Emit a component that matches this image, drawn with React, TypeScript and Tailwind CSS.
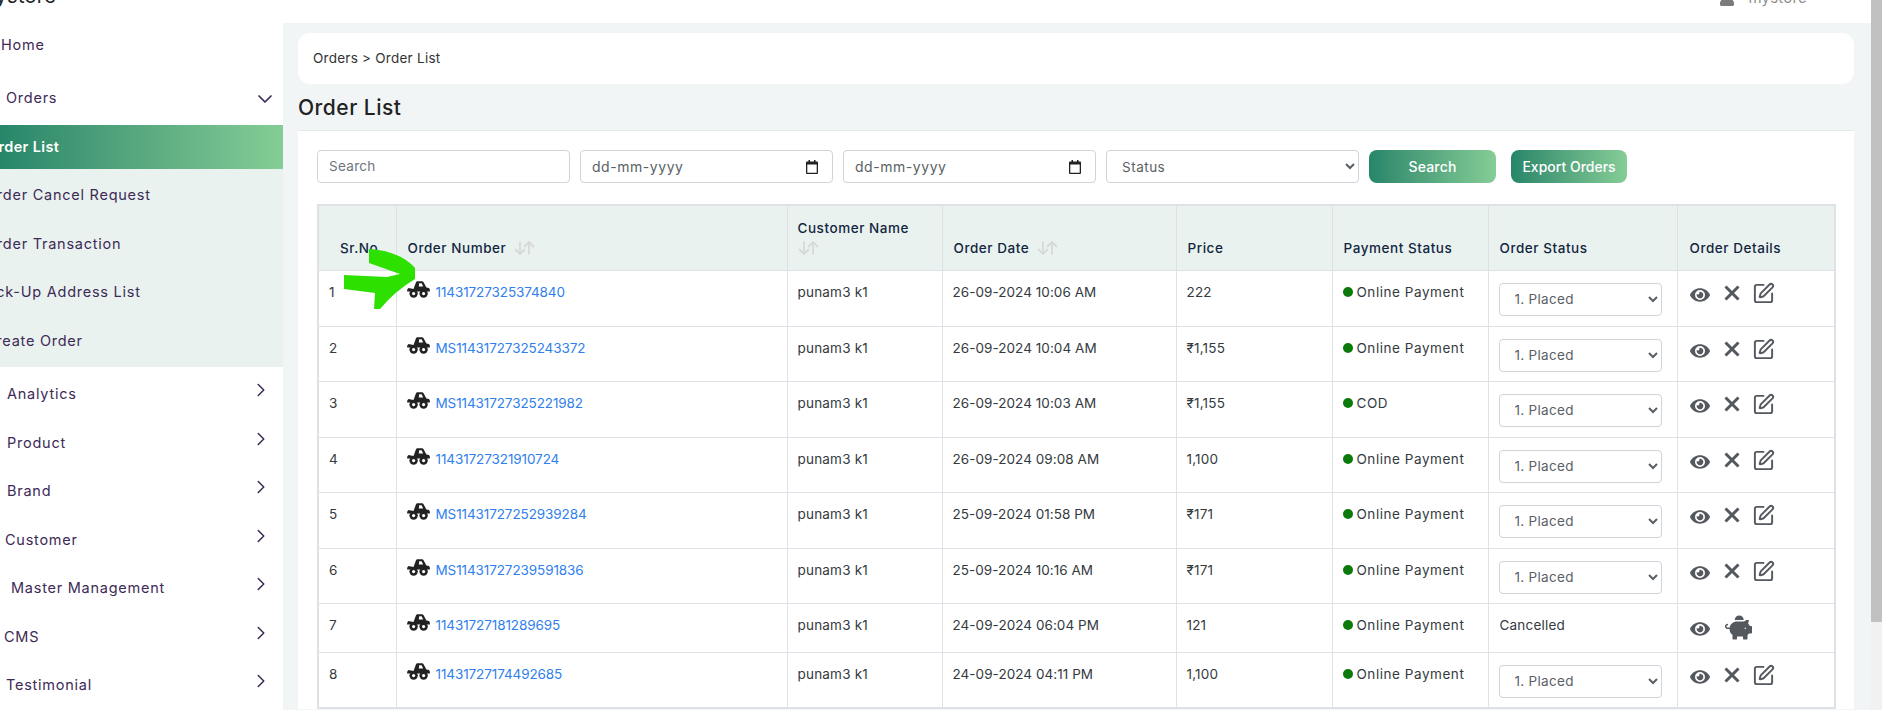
import React from "react";
import { ChevronDown, ChevronRight, SquarePen } from "lucide-react";
import { FaEye, FaPiggyBank, FaUser } from "react-icons/fa";

const font = { fontFamily: '"Inter", "Open Sans", sans-serif' };

const subItems = [
  { label: "Order Cancel Request", cls: "-ml-[15px]" },
  { label: "Order Transaction", cls: "-ml-[15px]" },
  { label: "Pick-Up Address List", cls: "-ml-[18px]" },
  { label: "Create Order", cls: "-ml-[15px]" },
];
const navItems = [
  { label: "Analytics", cls: "ml-[7px]" },
  { label: "Product", cls: "ml-[7px]" },
  { label: "Brand", cls: "ml-[7px]" },
  { label: "Customer", cls: "ml-[5px]" },
  { label: "Master Management", cls: "ml-[11px]" },
  { label: "CMS", cls: "ml-[4px]" },
  { label: "Testimonial", cls: "ml-[6px]" },
];

const rows = [
  ["1", "11431727325374840", "26-09-2024 10:06 AM", "222", "Online Payment", "h-[56px]"],
  ["2", "MS11431727325243372", "26-09-2024 10:04 AM", "₹1,155", "Online Payment", "h-[55px]"],
  ["3", "MS11431727325221982", "26-09-2024 10:03 AM", "₹1,155", "COD", "h-[56px]"],
  ["4", "11431727321910724", "26-09-2024 09:08 AM", "1,100", "Online Payment", "h-[55px]"],
  ["5", "MS11431727252939284", "25-09-2024 01:58 PM", "₹171", "Online Payment", "h-[56px]"],
  ["6", "MS11431727239591836", "25-09-2024 10:16 AM", "₹171", "Online Payment", "h-[55px]"],
  ["7", "11431727181289695", "24-09-2024 06:04 PM", "121", "Online Payment", "h-[49px]"],
  ["8", "11431727174492685", "24-09-2024 04:11 PM", "1,100", "Online Payment", "h-[56px]"],
];

function Sort() {
  return (
    <svg width="21" height="14" viewBox="0 0 21 14" fill="none" stroke="#d7d9d9" strokeWidth="1.8" className="shrink-0">
      <path d="M6 0.5V13 M1 8l5 5 5-5" />
      <path d="M15 13.5V1 M10 6l5-5 5 5" />
    </svg>
  );
}

function Truck() {
  return (
    <svg width="23" height="17" viewBox="0 0 23 17" className="mr-[6px] -mt-[4px] shrink-0">
      <path d="M6.5 8 L9 1.2 Q9.3 0.3 10.5 0.3 H15 Q16 0.3 16.6 1.3 L19.4 6.5 L22 7 Q23 7.5 23 10.5 H0 Q0 7.5 1.5 7 Z M12.2 2.3 L11.8 5.5 H16.2 L14.6 2.3 Z" fill="#222" fillRule="evenodd" />
      <circle cx="6.6" cy="12.6" r="4.2" fill="#222" />
      <circle cx="16.6" cy="12.6" r="4.2" fill="#222" />
      <circle cx="6.6" cy="12.6" r="1.6" fill="#fff" />
      <circle cx="16.6" cy="12.6" r="1.6" fill="#fff" />
    </svg>
  );
}

function CalendarGlyph() {
  return (
    <svg width="12" height="14" viewBox="0 0 12 14" className="shrink-0">
      <path d="M2.5 0h1.5v1.5h4V0h1.5v1.5H11a1 1 0 0 1 1 1V13a1 1 0 0 1-1 1H1a1 1 0 0 1-1-1V2.5a1 1 0 0 1 1-1h1.5z M1.3 4.5v8.2h9.4V4.5z" fill="#222" fillRule="evenodd" />
    </svg>
  );
}

function DateBox() {
  return (
    <div className="flex h-[33px] w-[253px] items-center justify-between rounded-[4px] border border-[#ced4da] bg-white pl-[11px] pr-[14px] text-[14px] tracking-[0.55px] text-[#5a5f65]">
      <span>dd-mm-yyyy</span>
      <CalendarGlyph />
    </div>
  );
}

const thCls = "border border-[#dee2e6] px-[11px] pb-[12px] align-bottom text-left text-[13.5px] font-medium leading-[20px] tracking-[0.55px] text-[#12263f]";
const tdCls = "border border-[#dee2e6] px-[10px] pt-[11px] align-top text-[13.5px] leading-[20px] tracking-[0.2px] text-[#333a40]";

export default function App() {
  return (
    <div className="flex h-[710px] w-[1882px] overflow-hidden bg-white" style={font}>
      <div className="flex min-w-0 flex-1 flex-col">
        <header className="flex h-[23px] shrink-0 items-start justify-between overflow-hidden bg-white">
          <span className="-ml-[22px] -mt-[17px] text-[20px] leading-[26px] tracking-[0.3px] text-[#222]">mystore</span>
          <div className="mr-[64px] -mt-[12px] flex items-start gap-[13px] text-[15px] leading-[20px] text-[#8f8f8f]">
            <FaUser size={16} className="mt-[2px] text-[#7b7b7b]" />
            <span className="tracking-[0.2px]">mystore</span>
          </div>
        </header>
        <div className="flex min-h-0 flex-1">
          <aside className="w-[283px] shrink-0 overflow-hidden bg-white text-[14.5px] tracking-[0.75px] text-[#3d2a56]">
            <div className="flex h-[44px] items-center pl-[1px]">Home</div>
            <div className="flex h-[58px] items-center justify-between pb-[7px] pl-[6px] pr-[6px] pt-[11px]">
              <span>Orders</span>
              <ChevronDown size={24} strokeWidth={1.7} className="mt-[2px]" />
            </div>
            <div className="flex h-[44px] items-center overflow-hidden bg-gradient-to-r from-[#26866a] to-[#85cd96] font-semibold tracking-[0.35px] text-white">
              <span className="-ml-[13px]">Order List</span>
            </div>
            <div className="bg-[#e9f2ef] pt-[2px] pb-[2px]">
              {subItems.map((s) => (
                <div key={s.label} className="flex h-[48.5px] items-center overflow-hidden">
                  <span className={`whitespace-nowrap ${s.cls}`}>{s.label}</span>
                </div>
              ))}
            </div>
            {navItems.map((n) => (
              <div key={n.label} className="flex h-[48.5px] items-center justify-between pr-[11px]">
                <span className={`pt-[6px] ${n.cls}`}>{n.label}</span>
                <ChevronRight size={22} strokeWidth={1.7} className="-mt-[2px]" />
              </div>
            ))}
          </aside>
          <main className="min-w-0 flex-1 bg-[#f1f5f5] pl-[15px] pr-[17px] pt-[10px]">
            <div className="flex h-[51px] items-center rounded-[12px] bg-white pl-[15px] text-[13.5px] tracking-[0.25px] text-[#333]">
              Orders &gt; Order List
            </div>
            <h1 className="mt-[10px] h-[36px] text-[21px] font-medium leading-[28px] tracking-[0.5px] text-[#222]">Order List</h1>
            <section className="border-t border-[#e6e9ea] bg-white pl-[19px] pr-[19px] pt-[19px]">
              <div className="flex items-center">
                <input
                  placeholder="Search"
                  className="-mt-[1px] h-[33px] w-[253px] rounded-[4px] border border-[#ced4da] bg-white pl-[11px] text-[13.5px] tracking-[0.3px] placeholder:text-[#6c757d]"
                />
                <div className="ml-[10px]"><DateBox /></div>
                <div className="ml-[10px]"><DateBox /></div>
                <select className="ml-[10px] h-[33px] w-[253px] rounded-[4px] border border-[#ced4da] bg-white pl-[11px] text-[13.5px] tracking-[0.5px] text-[#5a5f65]">
                  <option>Status</option>
                </select>
                <button className="ml-[10px] h-[33px] w-[127px] rounded-[8px] bg-gradient-to-r from-[#26866a] to-[#85cd96] text-[14px] font-medium tracking-[0.2px] text-white">Search</button>
                <button className="ml-[15px] h-[33px] w-[116px] rounded-[8px] bg-gradient-to-r from-[#26866a] to-[#85cd96] text-[14px] font-medium text-white">Export Orders</button>
              </div>
              <table className="mt-[21px] w-[1517px] table-fixed border-collapse border-2 border-[#dee2e6]">
                <colgroup>
                  <col className="w-[78px]" />
                  <col className="w-[391px]" />
                  <col className="w-[155px]" />
                  <col className="w-[234px]" />
                  <col className="w-[156px]" />
                  <col className="w-[156px]" />
                  <col className="w-[189px]" />
                  <col className="w-[158px]" />
                </colgroup>
                <thead>
                  <tr className="h-[65px] bg-[#e9f2ef]">
                    <th className={`${thCls} !pl-[21px]`}>Sr.No</th>
                    <th className={thCls}><div className="flex items-center gap-[8px]">Order Number <Sort /></div></th>
                    <th className={`${thCls} !pl-[10px]`}>Customer Name<div className="flex h-[20px] items-center"><Sort /></div></th>
                    <th className={thCls}><div className="flex items-center gap-[8px]">Order Date <Sort /></div></th>
                    <th className={thCls}>Price</th>
                    <th className={thCls}>Payment Status</th>
                    <th className={thCls}>Order Status</th>
                    <th className={`${thCls} !pl-[12px]`}>Order Details</th>
                  </tr>
                </thead>
                <tbody>
                  {rows.map((r) => {
                    const cancelled = r[0] === "7";
                    return (
                      <tr key={r[0]} className={r[5]}>
                        <td className={tdCls}>{r[0]}</td>
                        <td className={tdCls}>
                          <div className="flex items-center">
                            <Truck />
                            <a className="whitespace-nowrap tracking-[-0.1px] text-[#2f80ed]">{r[1]}</a>
                          </div>
                        </td>
                        <td className={tdCls}>punam3 k1</td>
                        <td className={`${tdCls} !tracking-[0.05px]`}>{r[2]}</td>
                        <td className={tdCls}>{r[3]}</td>
                        <td className={`${tdCls} !tracking-[0.55px]`}>
                          <span className="whitespace-nowrap"><span className="mr-[4px] inline-block h-[10px] w-[10px] rounded-full bg-[#0b7a0b]" />{r[4]}</span>
                        </td>
                        <td className={`${tdCls} ${cancelled ? "!pl-[11px]" : "!pt-[12px]"}`}>
                          {cancelled ? (
                            "Cancelled"
                          ) : (
                            <select className="h-[33px] w-[163px] rounded-[4px] border border-[#ced4da] bg-white pl-[11px] text-[13.5px] tracking-[0.3px] text-[#5a5f65]">
                              <option>1. Placed</option>
                            </select>
                          )}
                        </td>
                        <td className={`${tdCls} !pl-[12px] !pt-[14px]`}>
                          <div className="flex items-center text-[#54585f]">
                            <FaEye size={20} />
                            {cancelled ? (
                              <FaPiggyBank size={27} className="ml-[15px] -mt-[4px]" />
                            ) : (
                              <>
                                <svg width="16" height="16" viewBox="0 0 16 16" className="ml-[14px] -mt-[4px]" stroke="currentColor" strokeWidth="3" fill="none">
                                  <path d="M1.5 1.5 L14.5 14.5 M14.5 1.5 L1.5 14.5" />
                                </svg>
                                <SquarePen size={23} strokeWidth={2} className="ml-[12px] -mt-[3px]" />
                              </>
                            )}
                          </div>
                        </td>
                      </tr>
                    );
                  })}
                </tbody>
              </table>
            </section>
          </main>
        </div>
      </div>
      <div className="flex w-[11px] shrink-0 flex-col bg-[#f1f1f1]">
        <div className="h-[622px] bg-[#c1c1c1]" />
      </div>
      <svg width="80" height="70" viewBox="0 0 80 70" className="absolute left-[340px] top-[246px]">
        <path d="M4 29 L47 31 L60 28 L29 17 L29 3 Q60 5 75 22 L75 33 Q55 45 40 63 L34 63 L35 47 L4 43 Z" fill="#2ee000" />
      </svg>
    </div>
  );
}
